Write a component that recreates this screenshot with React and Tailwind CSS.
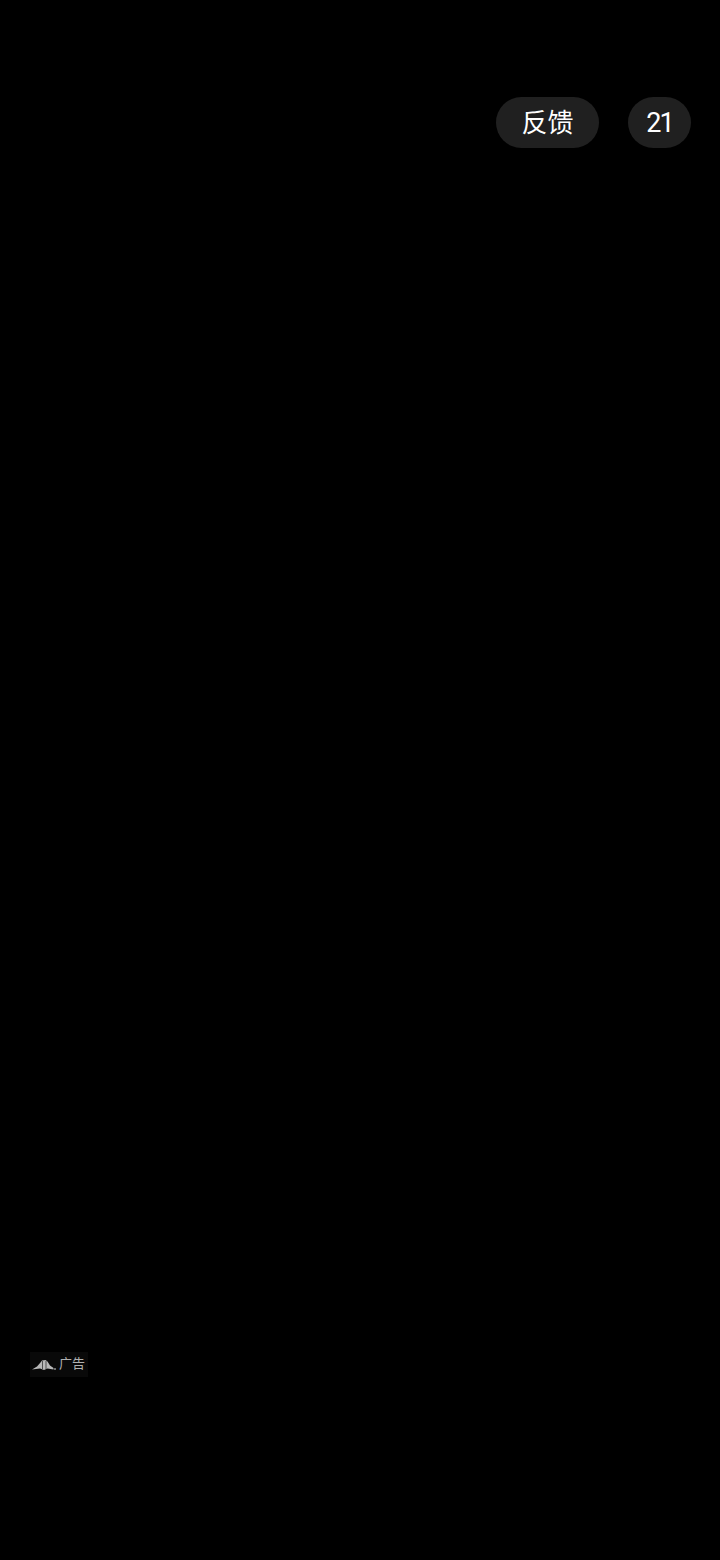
const CJK = 'font-["Roboto","Noto_Sans_CJK_SC",sans-serif]';

function AdMark() {
  return (
    <svg width="24" height="12" viewBox="0 0 24 12" className="shrink-0">
      <path d="M0 10.5 L5 7.5 L8.5 3.5 L10 1.5 L13.5 1 L15.5 2.5 L18 6.5 L21.5 9 L21.5 10.5 L15.5 9.5 L12 11 L8 9.5 Z" fill="#b8b8b8" />
      <path d="M10.5 2 L10.5 10 M14 2 L14 10" stroke="#090909" strokeWidth="0.6" />
      <circle cx="23" cy="10" r="1" fill="#8f8f8f" />
    </svg>
  );
}

export default function App() {
  return (
    <div className={`flex h-[1560px] w-[720px] flex-col bg-black ${CJK}`}>
      {/* Top actions */}
      <div className="flex justify-end gap-[29px] pr-[29px] pt-[97px]">
        <button className="flex h-[51px] w-[103px] items-center justify-center rounded-full bg-[#202020] pt-[2px] text-[26px] text-white">
          反馈
        </button>
        <div className="flex h-[51px] w-[63px] items-center justify-center rounded-full bg-[#202020] pt-[2px] text-[27px] tracking-[-2px] text-white">
          21
        </div>
      </div>

      {/* Ad badge */}
      <div className="ml-[30px] mt-[1204px] flex h-[25px] w-[58px] items-center gap-[3px] bg-[#090909] pl-[2px]">
        <AdMark />
        <span className="pb-[2px] text-[13px] leading-none text-[#b0b0b0]">广告</span>
      </div>
    </div>
  );
}
